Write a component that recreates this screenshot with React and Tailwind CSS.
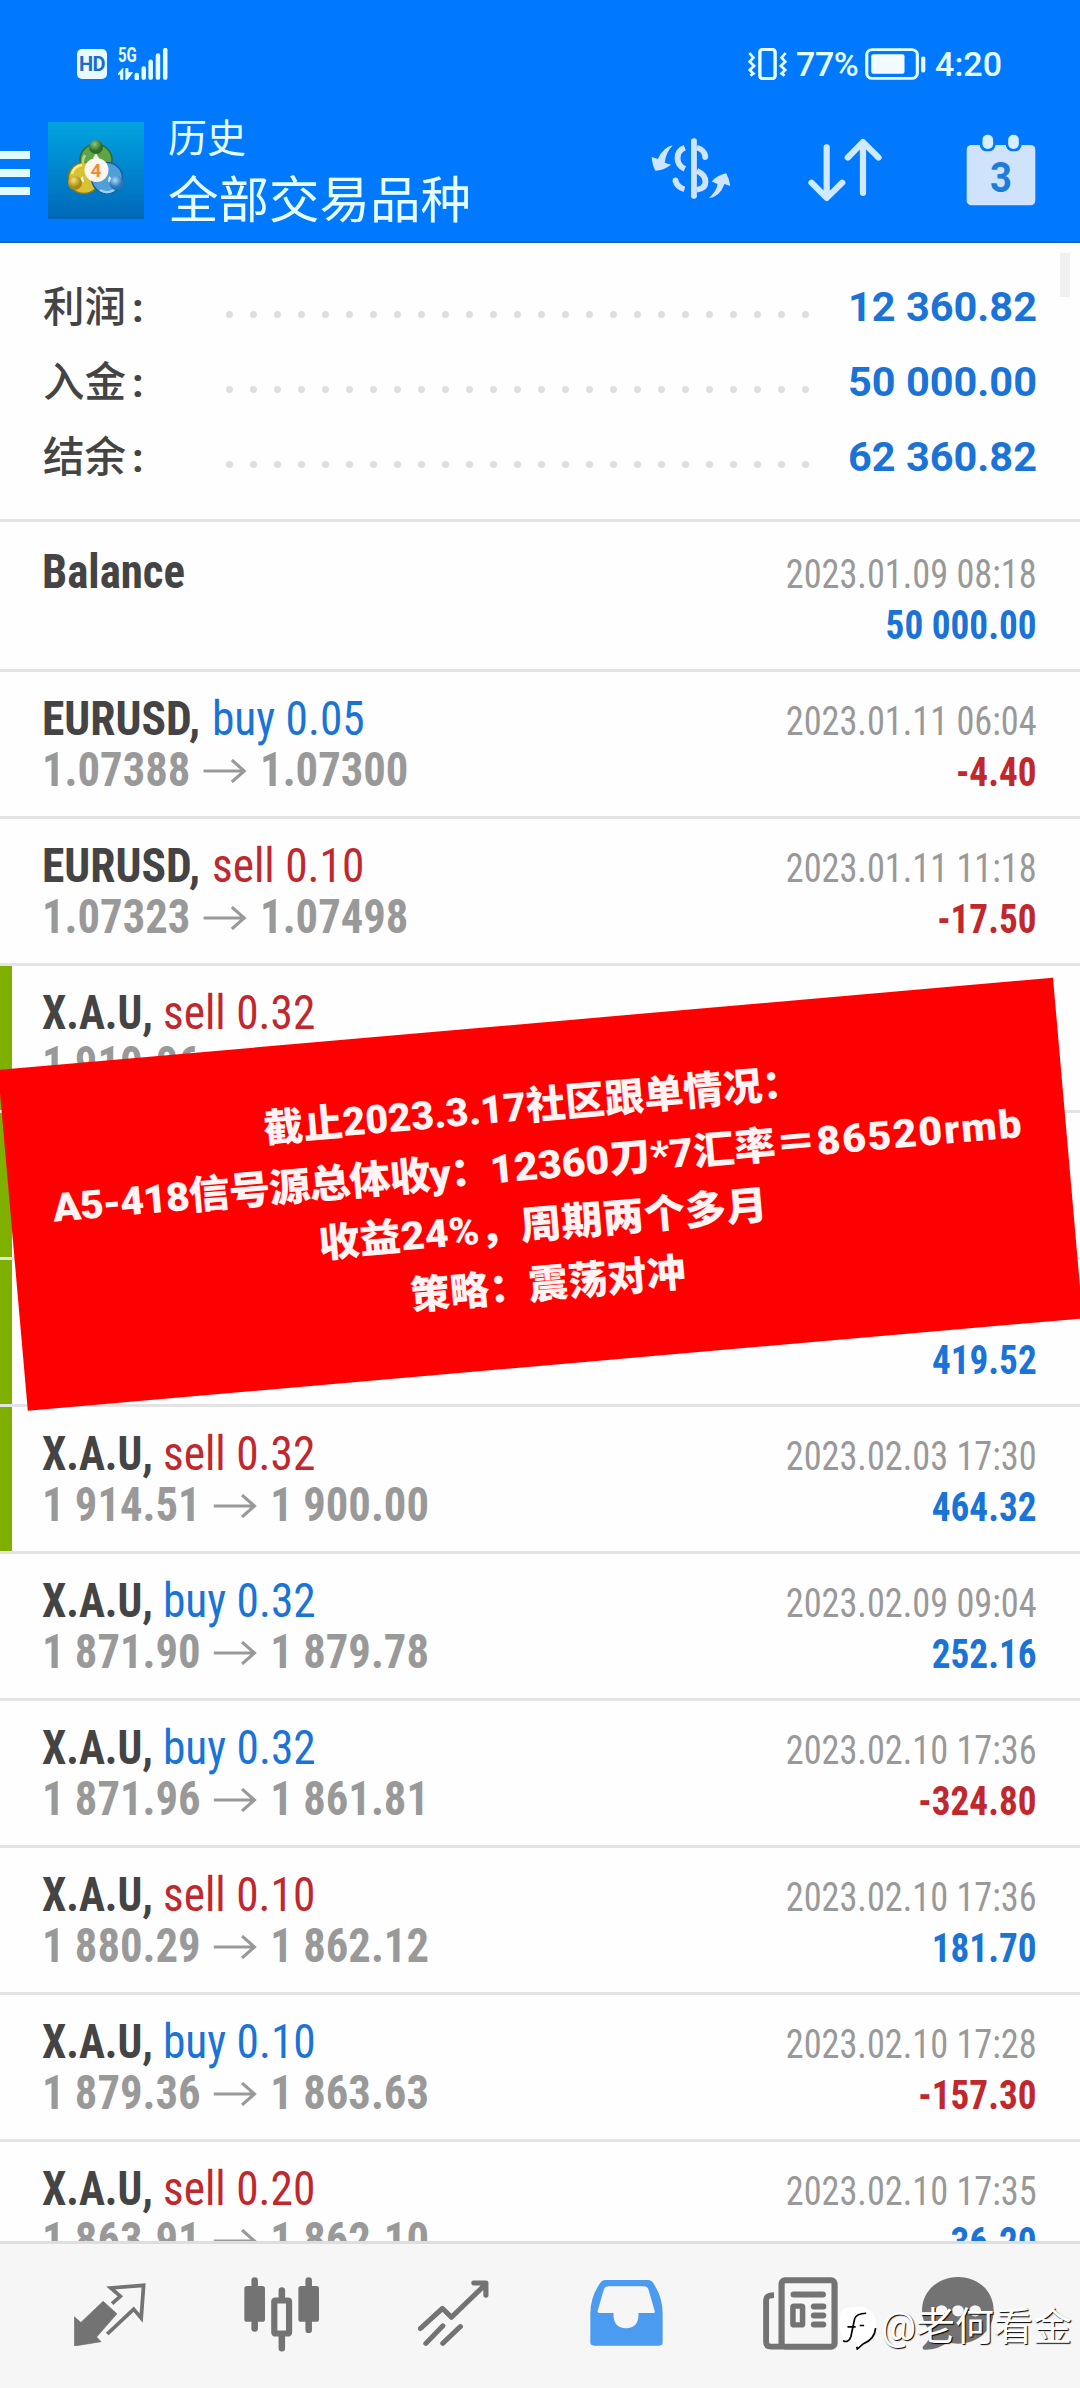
const rows = [
  { sym: 'EURUSD', side: 'buy', lot: '0.05', from: '1.07388', to: '1.07300', date: '2023.01.11 06:04', amount: '-4.40' },
  { sym: 'EURUSD', side: 'sell', lot: '0.10', from: '1.07323', to: '1.07498', date: '2023.01.11 11:18', amount: '-17.50' },
  { sym: 'X.A.U', side: 'sell', lot: '0.32', from: '1 910.06', mark: true },
  { mark: true },
  { amount: '419.52', mark: true },
  { sym: 'X.A.U', side: 'sell', lot: '0.32', from: '1 914.51', to: '1 900.00', date: '2023.02.03 17:30', amount: '464.32', mark: true },
  { sym: 'X.A.U', side: 'buy', lot: '0.32', from: '1 871.90', to: '1 879.78', date: '2023.02.09 09:04', amount: '252.16' },
  { sym: 'X.A.U', side: 'buy', lot: '0.32', from: '1 871.96', to: '1 861.81', date: '2023.02.10 17:36', amount: '-324.80' },
  { sym: 'X.A.U', side: 'sell', lot: '0.10', from: '1 880.29', to: '1 862.12', date: '2023.02.10 17:36', amount: '181.70' },
  { sym: 'X.A.U', side: 'buy', lot: '0.10', from: '1 879.36', to: '1 863.63', date: '2023.02.10 17:28', amount: '-157.30' },
  { sym: 'X.A.U', side: 'sell', lot: '0.20', from: '1 863.91', to: '1 862.10', date: '2023.02.10 17:35', amount: '36.20' },
];

const summary = [
  ['利润', '12 360.82'],
  ['入金', '50 000.00'],
  ['结余', '62 360.82'],
];

function Icon({ box, w, h, className = '', children }) {
  return (
    <svg viewBox={box} width={w} height={h} preserveAspectRatio="none" className={`block shrink-0 ${className}`} fill="none">
      {children}
    </svg>
  );
}

function StatusBar() {
  return (
    <div className="flex h-32 items-center pr-[78px] pl-[77px] text-[#e6ffff]">
      <div className="flex h-[30px] w-[30px] items-center justify-center rounded-[5px] bg-[#e8faff] text-[20px] leading-none font-bold tracking-[-0.5px] text-[#1c6ccb]">
        HD
      </div>
      <div className="ml-[11px] flex h-8 flex-col">
        <span className="origin-left scale-x-[0.75] text-[20px] leading-[15px] font-bold">5G</span>
        <Icon box="343 114 44 36" w={15} h={12} className="mt-[5px]">
          <path d="M343 133 L357 116 V148 H351 V133Z M366 116 H372 V128 H385 L370 148 H366Z" fill="currentColor" stroke="currentColor" strokeWidth="3" />
        </Icon>
      </div>
      <Icon box="390 54 98 96" w={34} h={32} className="-ml-[9px]">
        <path d="M398 135V145M418 115V143M438 95V143M459 76V143M480 60V143" stroke="currentColor" strokeWidth="13" strokeLinecap="round" />
      </Icon>
      <Icon box="610 54 118 96" w={40} h={32} className="ml-auto">
        <rect x="645" y="58" width="45" height="88" rx="9" stroke="currentColor" strokeWidth="10" />
        <path d="M614 69l12 14-11 12 13 13-13 12 11 11-9 6M721 69l-12 14 11 12-13 13 13 12-11 11 9 6" stroke="currentColor" strokeWidth="8" />
      </Icon>
      <span className="ml-2 w-[65px] text-[34px] leading-none font-medium tracking-[-0.5px]">77%</span>
      <Icon box="952 54 176 98" w={61} h={32} className="ml-1">
        <rect x="957" y="59" width="146" height="88" rx="16" stroke="currentColor" strokeWidth="9" />
        <rect x="970" y="73" width="96" height="60" rx="6" fill="#f2fbff" />
        <rect x="1114" y="80" width="12" height="49" rx="5" fill="currentColor" />
      </Icon>
      <span className="ml-[9px] text-[34px] leading-none font-medium">4:20</span>
    </div>
  );
}

function AppLogo() {
  return (
    <div className="ml-[18px] flex h-[97px] w-24 items-center justify-center bg-linear-to-b from-[#04a4e0] to-[#0068b8]">
      <Icon box="0 0 96 97" w={96} h={97}>
        <defs>
          <radialGradient id="g1" cx="0.4" cy="0.3"><stop offset="0" stopColor="#8cc878" /><stop offset="1" stopColor="#2c6d2a" /></radialGradient>
          <radialGradient id="g2" cx="0.4" cy="0.3"><stop offset="0" stopColor="#f3e37a" /><stop offset="1" stopColor="#a98a10" /></radialGradient>
          <radialGradient id="g3" cx="0.4" cy="0.3"><stop offset="0" stopColor="#a8dcff" /><stop offset="1" stopColor="#2a74b8" /></radialGradient>
        </defs>
        <circle cx="48" cy="38" r="16" fill="#5fa548" stroke="#2f6b2c" strokeWidth="1.5" />
        <circle cx="36" cy="56" r="15.5" fill="#d8c233" stroke="#8d7714" strokeWidth="1.5" />
        <circle cx="59" cy="56" r="15.5" fill="#4f9fdb" stroke="#1b5c98" strokeWidth="1.5" />
        <path d="M37 33A14 14 0 0 0 35 42" stroke="#a6d48a" strokeWidth="2.5" />
        <path d="M24 52A12 12 0 0 1 34 43" stroke="#f3ea8c" strokeWidth="2.5" />
        <path d="M52 68A13 13 0 0 0 66 68" stroke="#9fd2f5" strokeWidth="2.5" />
        <path d="M48 31l3 5-3 3-3-3zM35 54l-5 5 6 1zM61 54l5 5-6 1z" fill="#e8f4ee" />
        <circle cx="48" cy="25" r="7" fill="url(#g1)" />
        <circle cx="27" cy="61" r="7" fill="url(#g2)" />
        <circle cx="68.500" cy="61" r="7" fill="url(#g3)" />
        <circle cx="48.500" cy="48" r="12" fill="#fbf6ef" />
        <text x="48" y="55" textAnchor="middle" fontSize="19" fontWeight="700" fill="#f08c3a">4</text>
      </Icon>
    </div>
  );
}

function Header() {
  return (
    <header className="flex h-[243px] shrink-0 flex-col border-b-2 border-[#1668be] bg-[#0079ff]">
      <StatusBar />
      <div className="-mt-[10px] flex items-start">
        <div className="mt-[33px] flex flex-col gap-[10px]">
          <div className="h-2 w-[30px] bg-[#e0fbff]" />
          <div className="h-2 w-[30px] bg-[#e0fbff]" />
          <div className="h-2 w-[30px] bg-[#e0fbff]" />
        </div>
        <div className="mt-1"><AppLogo /></div>
        <div className="ml-6 text-[#e6ffff]">
          <div className="text-[39px] leading-[42px] whitespace-nowrap">历史</div>
          <div className="mt-[13px] text-[50.5px] leading-[56px] whitespace-nowrap">全部交易品种</div>
        </div>
        <div className="mt-[16px] mr-[44px] ml-auto flex items-start">
          <Icon box="320 325 232 184" w={80} h={61} className="mt-1">
            <g fill="#cfe5ff">
              <path d="M383 347Q356 352 340 388L322 382Q324 408 333 424Q356 424 378 406L360 400Q362 370 383 347Z" />
              <path d="M488 507Q512 482 513 464L496 456Q512 436 538 431Q547 447 550 470L533 464Q520 502 488 507Z" />
              <rect x="436" y="326" width="17" height="182" rx="8" />
            </g>
            <path d="M418 354Q397 362 397 385T418 418M453 354Q476 360 478 384M453 424Q478 436 478 457T453 481M390 452Q396 474 417 480" stroke="#cfe5ff" strokeWidth="17" />
            <circle cx="477" cy="383" r="8" fill="#cfe5ff" />
            <circle cx="391" cy="452" r="8" fill="#cfe5ff" />
          </Icon>
          <Icon box="782 325 214 192" w={74} h={64} className="mt-1 ml-[77px]">
            <path d="M836 353V503M792 459L836 505L881 459M941 490V340M897 384L941 337L986 384" stroke="#cfe9ff" strokeWidth="18" strokeLinecap="round" strokeLinejoin="round" />
          </Icon>
          <Icon box="1240 312 204 216" w={70} h={72} className="ml-[84px]">
            <rect x="1242" y="345" width="200" height="181" rx="14" fill="#cfe3fd" />
            <rect x="1280" y="306" width="46" height="58" rx="20" fill="#0079ff" />
            <rect x="1356" y="306" width="46" height="58" rx="20" fill="#0079ff" />
            <rect x="1288" y="314" width="31" height="43" rx="15" fill="#d5efff" />
            <rect x="1363" y="314" width="31" height="43" rx="15" fill="#d5efff" />
            <text x="1342" y="487" textAnchor="middle" fontSize="130" fontWeight="700" textLength="64" lengthAdjust="spacingAndGlyphs" fill="#1c7ddc">3</text>
          </Icon>
        </div>
      </div>
    </header>
  );
}

function Summary() {
  return (
    <section className="flex h-[279px] shrink-0 flex-col border-b-[3px] border-[#e3e3e3] pt-[26px] pr-[43px] pl-[43px]">
      {summary.map(([label, value]) => (
        <div key={label} className="flex h-[75px] items-center">
          <span className="w-[183px] pt-0.5 text-[41.5px] leading-[73px] font-medium whitespace-nowrap text-[#444]">
            {label}
            <span className="ml-1.5 font-bold">:</span>
          </span>
          <div className="mt-[15px] flex gap-[17px]">
            {Array.from({ length: 25 }, (_, i) => (
              <i key={i} className="block h-[7px] w-[7px] rounded-full bg-[#dedede]" />
            ))}
          </div>
          <span className="ml-auto text-[41.5px] leading-[75px] font-bold whitespace-nowrap text-[#1a73d6]">{value}</span>
        </div>
      ))}
    </section>
  );
}

function Arrow() {
  return (
    <Icon box="590 294 130 70" w={47} h={24} className="mt-[2px] mr-[15px] ml-[13px]">
      <path d="M592 329H714M676 297L713 329L676 361" stroke="#999" strokeWidth="9" />
    </Icon>
  );
}

function Symbol({ name }) {
  return name === 'EURUSD' ? (
    <span className="w-[170px] font-bold text-[#444]">
      <span className="inline-block origin-left scale-x-[0.948]">{name},</span>
    </span>
  ) : (
    <span className="w-[121px] font-bold text-[#444]">
      <span className="inline-block origin-left scale-x-[0.905]">{name},</span>
    </span>
  );
}

function Row({ r }) {
  const neg = r.amount && r.amount.startsWith('-');
  return (
    <div className="flex h-[147px] shrink-0 border-b-[3px] border-[#e3e3e3]">
      <div className={r.mark ? 'w-3 shrink-0 bg-[#7fb000]' : 'w-3 shrink-0'} />
      <div className="flex grow justify-between pr-[43px] pl-[30px] font-stretch-condensed whitespace-nowrap">
        <div className="pt-[21px] text-[48px] leading-[51px]">
          <div className="flex h-[51px]">
            {r.sym && <Symbol name={r.sym} />}
            {r.side && (
              <span className={r.side === 'buy' ? 'origin-left scale-x-[0.945] text-[#1a73d6]' : 'origin-left scale-x-[0.945] text-[#c0282e]'}>
                {r.side} {r.lot}
              </span>
            )}
          </div>
          {r.from && (
            <div className="flex h-[51px] origin-left scale-x-[0.93] items-center font-bold text-[#999]">
              {r.from}
              {r.to && <Arrow />}
              {r.to}
            </div>
          )}
        </div>
        <div className="pt-6 text-right text-[40px] leading-[51px]">
          <div className="h-[51px] origin-right scale-x-[0.907] text-[#999]">{r.date}</div>
          <div className={neg ? 'origin-right scale-x-[0.93] font-bold text-[#c0282e]' : 'origin-right scale-x-[0.93] font-bold text-[#1a73d6]'}>{r.amount}</div>
        </div>
      </div>
    </div>
  );
}

function Banner() {
  return (
    <div className="absolute top-[1070px] left-[-2px] flex h-[342px] w-[1059px] origin-top-left -rotate-5 flex-col items-center bg-[#ff0000] pt-[53px] text-[39.5px] leading-[59.5px] font-black whitespace-nowrap text-[#fff3f3]">
      <div>截止2023.3.17社区跟单情况：</div>
      <div className="scale-x-[1.044]">
        <span className="tracking-[-0.9px]">A5-418信号源总体收y：</span>12360刀*7汇率＝<span className="tracking-[1.6px]">86520rmb</span>
      </div>
      <div className="scale-x-[1.046]">收益24%，周期两个多月</div>
      <div>策略：震荡对冲</div>
    </div>
  );
}

function Nav() {
  return (
    <nav className="relative flex h-[147px] shrink-0 items-start border-t-[3px] border-[#dedede] bg-[#f6f6f6] pl-[74px]">
      <Icon box="215 458 210 190" w={72} h={63} className="mt-[39px]">
        <path d="M300 513L340 551L281 621L294 635L216 648V560L235 577Z" fill="#737373" stroke="#737373" strokeWidth="2" strokeLinejoin="round" />
        <path d="M326 520L350 498L322 473L418 465L411 564L389 537L312 612" stroke="#737373" strokeWidth="11" />
      </Icon>
      <Icon box="708 440 218 224" w={75} h={75} className="mt-[33px] ml-[98px]">
        <rect x="709" y="467" width="60" height="107" rx="8" fill="#737373" />
        <rect x="866" y="467" width="60" height="107" rx="8" fill="#737373" />
        <path d="M739 450V594M896 450V598M818 480V505M818 614V653" stroke="#737373" strokeWidth="19" strokeLinecap="round" />
        <rect x="796" y="510" width="43" height="99" rx="3" stroke="#737373" strokeWidth="18" />
      </Icon>
      <Icon box="1214 449 206 200" w={71} h={66} className="mt-9 ml-[99px]">
        <path d="M1221 596L1285 535L1311 562L1408 464M1376 458H1411V495M1237 641L1286 588M1286 641L1337 590" stroke="#737373" strokeWidth="15" strokeLinecap="round" strokeLinejoin="round" />
      </Icon>
      <Icon box="146 449 211 200" w={73} h={66} className="mt-9 ml-[101px]">
        <path fillRule="evenodd" d="M190 449H314Q324 449 330 460Q356 502 356 550V638Q356 648 346 648H158Q147 648 147 638V550Q147 502 174 460Q180 449 190 449ZM199 468Q190 468 186 478L168 543Q167 549 173 549H214Q212 595 250 595Q288 595 286 549H329Q335 549 333 543L315 478Q311 468 302 468Z" fill="#4b9bf0" />
      </Icon>
      <Icon box="646 440 218 218" w={75} h={73} className="mt-[33px] ml-[100px]">
        <rect x="700" y="450" width="154" height="198" rx="10" stroke="#737373" strokeWidth="18" />
        <path d="M678 494Q655 494 655 508V634Q655 648 670 648H704" stroke="#737373" strokeWidth="17" />
        <path d="M735 492H820M794 528H821M794 555H821M794 582H821" stroke="#737373" strokeWidth="18" strokeLinecap="round" />
        <rect x="733" y="527" width="28" height="56" rx="3" stroke="#737373" strokeWidth="16" />
      </Icon>
      <Icon box="1108 440 210 218" w={72} h={73} className="mt-[33px] ml-[84px]">
        <path d="M1213 440C1272 440 1317 482 1317 540S1272 639 1213 639Q1196 639 1183 635Q1155 658 1115 657Q1106 655 1112 646Q1130 630 1136 606Q1108 580 1108 540C1108 482 1155 440 1213 440Z" fill="#737373" />
        <circle cx="1165" cy="541" r="17" fill="#f6f6f6" />
        <circle cx="1213" cy="541" r="17" fill="#f6f6f6" />
        <circle cx="1263" cy="541" r="17" fill="#f6f6f6" />
      </Icon>
      <div className="absolute top-[61px] left-[839px] flex items-center">
        <Icon box="868 530 112 136" w={38} h={45}>
          <path d="M902 537Q936 530 960 546Q978 560 977 600Q974 634 940 646L922 664L918 641Q880 645 871 610Q864 560 880 543Q888 536 902 537Z" fill="#fff" />
          <path d="M976 600Q973 634 940 647L922 663L920 656M880 638Q896 646 903 626L914 572Q918 556 948 555M893 596H917M929 592H942" stroke="#000" strokeWidth="5" />
        </Icon>
        <span className="ml-[4px] text-[39px] leading-[45px] whitespace-nowrap text-white [text-shadow:1px_1px_1px_#000]">@老何看金</span>
      </div>
    </nav>
  );
}

export default function App() {
  return (
    <div className="relative flex h-[2388px] w-[1080px] flex-col overflow-hidden bg-[#fefefe] font-[Roboto,'Noto_Sans_CJK_SC',sans-serif]">
      <Header />
      <Summary />
      <div className="absolute top-[253px] right-[10px] h-11 w-[10px] bg-[#f0f0f0]" />
      <main className="flex min-h-0 grow flex-col overflow-hidden">
        <div className="flex h-[150px] shrink-0 justify-between border-b-[3px] border-[#e3e3e3] pt-[3px] pr-[43px] pl-[42px] font-stretch-condensed whitespace-nowrap">
          <div className="origin-left scale-x-[0.935] pt-[21px] text-[48px] leading-[51px] font-bold text-[#444]">Balance</div>
          <div className="pt-6 text-right text-[40px] leading-[51px]">
            <div className="origin-right scale-x-[0.907] text-[#999]">2023.01.09 08:18</div>
            <div className="origin-right scale-x-[0.93] font-bold text-[#1a73d6]">50 000.00</div>
          </div>
        </div>
        {rows.map((r, i) => (
          <Row key={i} r={r} />
        ))}
      </main>
      <Nav />
      <Banner />
    </div>
  );
}
